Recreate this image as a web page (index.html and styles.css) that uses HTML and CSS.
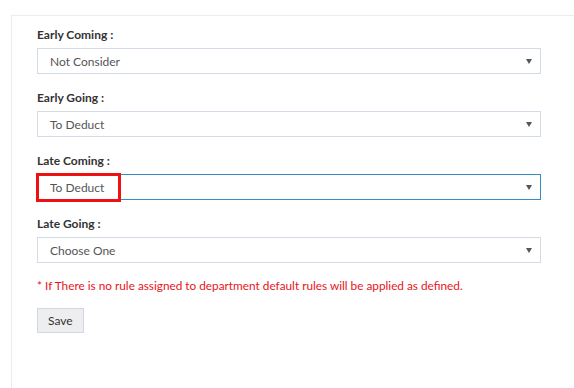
FILE: index.html
```html
<!DOCTYPE html>
<html>
<head>
<meta charset="utf-8">
<link rel="stylesheet" href="styles.css">
</head>
<body>
<div class="panel">
  <form class="form">
    <div class="field">
      <div class="label">Early Coming :</div>
      <div class="select"><span class="value">Not Consider</span><span class="caret"></span></div>
    </div>
    <div class="field">
      <div class="label">Early Going :</div>
      <div class="select"><span class="value">To Deduct</span><span class="caret"></span></div>
    </div>
    <div class="field">
      <div class="label">Late Coming :</div>
      <div class="select-wrap">
        <div class="select focused"><span class="value">To Deduct</span><span class="caret"></span></div>
        <div class="highlight"></div>
      </div>
    </div>
    <div class="field">
      <div class="label">Late Going :</div>
      <div class="select"><span class="value">Choose One</span><span class="caret"></span></div>
    </div>
    <p class="note">* If There is no rule assigned to department default rules will be applied as defined.</p>
    <button type="button" class="btn">Save</button>
  </form>
</div>
</body>
</html>
```

FILE: styles.css
```css
html, body {
  margin: 0;
  padding: 0;
  background: #fff;
  overflow: hidden;
}
body {
  font-family: Lato, "Open Sans", sans-serif;
  font-size: 12px;
  color: #333;
}
.panel {
  box-sizing: border-box;
  height: 373px;
  margin: 15px 0 0 11px;
  border-top: 1px solid #ececec;
  border-left: 1px solid #ececec;
  padding: 10px 0 0 25px;
}
.form {
  width: 504px;
  display: flex;
  flex-direction: column;
}
.field {
  display: flex;
  flex-direction: column;
  gap: 5px;
  margin-bottom: 15px;
}
.label {
  font-weight: 700;
  line-height: 17px;
  color: #333;
}
.select-wrap {
  position: relative;
}
.select {
  box-sizing: border-box;
  height: 26px;
  border: 1px solid #d3dce6;
  background: #fff;
  display: flex;
  align-items: center;
  justify-content: space-between;
  padding: 0 8px 0 12px;
  color: #555;
}
.select.focused {
  border-color: #338cc4;
}
.caret {
  width: 0;
  height: 0;
  border-left: 3px solid transparent;
  border-right: 3px solid transparent;
  border-top: 5px solid #555;
  margin-top: 1px;
}
.highlight {
  position: absolute;
  left: -1px;
  top: -1px;
  width: 85px;
  height: 29px;
  box-sizing: border-box;
  border: 3px solid #ee1111;
}
.note {
  margin: -1px 0 14px;
  line-height: 17px;
  font-size: 11.8px;
  color: #e8141c;
}
.btn {
  align-self: flex-start;
  box-sizing: border-box;
  height: 25px;
  padding: 0 10px;
  border: 1px solid #cfd9e3;
  background: #eeeeee;
  font-family: Lato, "Open Sans", sans-serif;
  font-size: 12px;
  color: #333;
  border-radius: 0;
}
```
